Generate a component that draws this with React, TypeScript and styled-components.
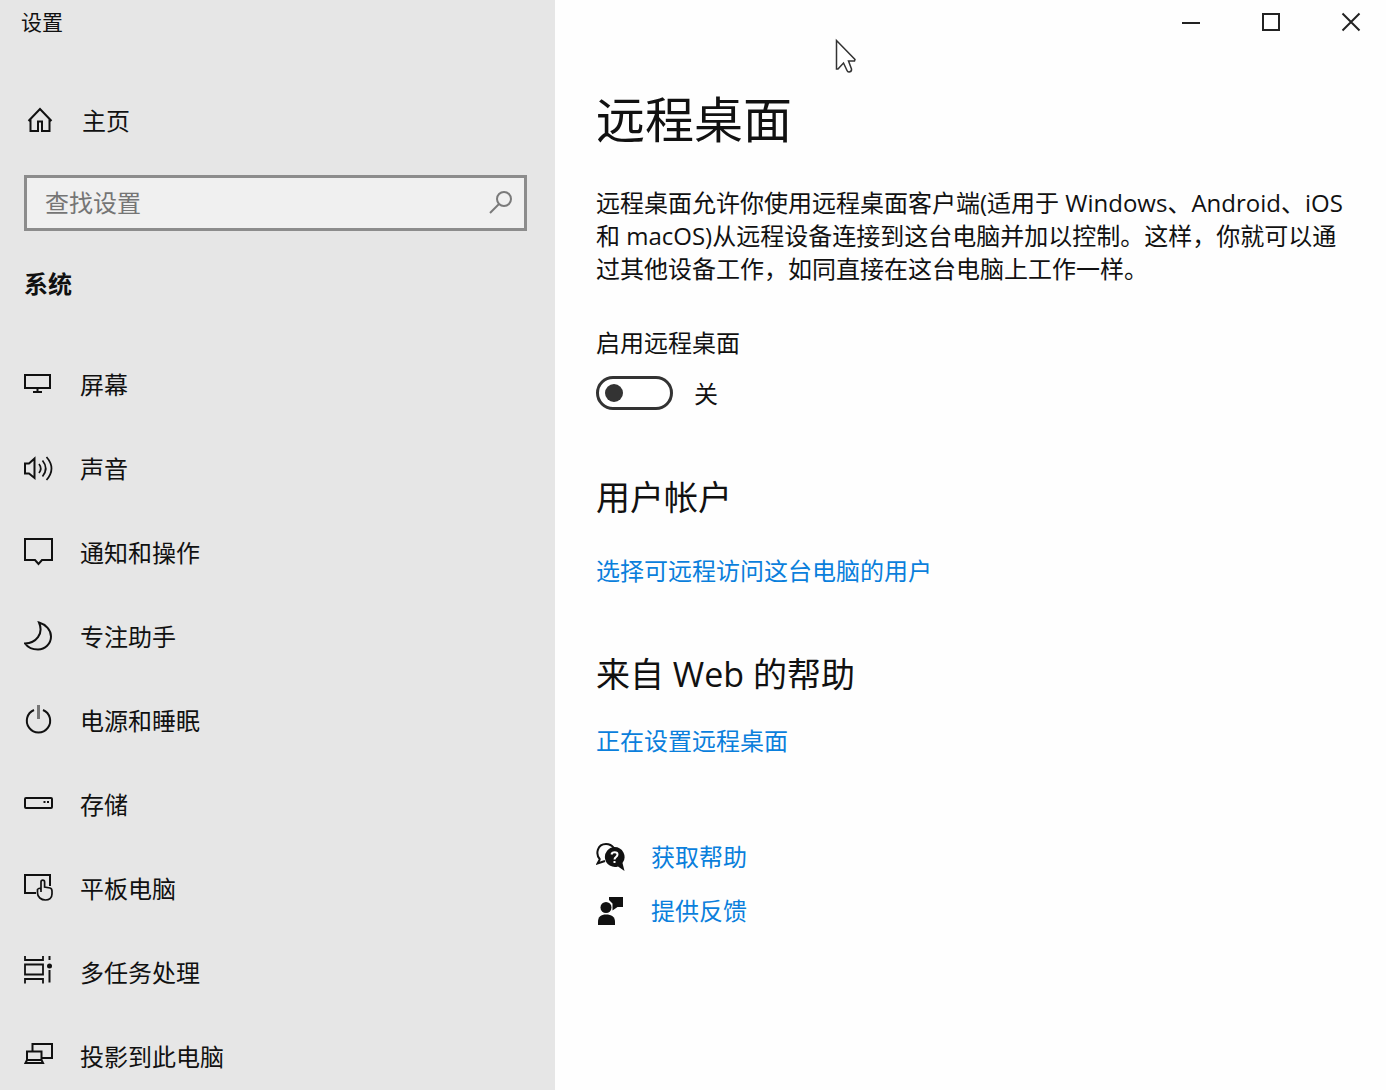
import React, { useState } from "react";
import styled, { createGlobalStyle } from "styled-components";

const GlobalStyle = createGlobalStyle`
  *, *::before, *::after { box-sizing: border-box; }
  body {
    margin: 0;
    background: #fefefe;
    color: #111;
    font-family: "Open Sans", "Noto Sans CJK SC", sans-serif;
    font-size: 24px;
    line-height: 33px;
  }
  h1, h2, p { margin: 0; font-weight: 400; }
`;

const Window = styled.div`
  display: flex;
  height: 100vh;
  overflow: hidden;
`;

const Sidebar = styled.aside`
  flex: 0 0 555px;
  background: #e6e6e6;
  overflow: hidden;
`;

const AppName = styled.div`
  height: 44px;
  padding-left: 21px;
  font-size: 21px;
  line-height: 44px;
`;

const SidebarLink = styled.a`
  display: flex;
  align-items: center;
  gap: 26px;
  height: 84px;
  padding: 0 0 2px 24px;
  color: inherit;
  text-decoration: none;
`;

const HomeLink = styled(SidebarLink)`
  margin-top: 35px;
  padding-left: 26px;
`;

const SearchBox = styled.label`
  display: flex;
  align-items: center;
  height: 56px;
  margin: 12px 28px 0 24px;
  padding: 0 10px 2px 18px;
  border: 3px solid #8c8c8c;
  background: #f0f0f0;
  color: #7a7a7a;
`;

const SearchInput = styled.input`
  flex: 1;
  min-width: 0;
  padding: 0;
  border: 0;
  outline: 0;
  background: transparent;
  color: #111;
  font: inherit;
  &::placeholder { color: #757575; opacity: 1; }
`;

const SectionName = styled.h2`
  margin: 36px 0 42px;
  padding-left: 24px;
  font-size: 24px;
  line-height: 34px;
  && { font-weight: 700; }
`;

const Main = styled.main`
  flex: 1;
  min-width: 0;
`;

const WindowButtons = styled.div`
  display: flex;
  justify-content: flex-end;
  gap: 10px;
`;

const WindowButton = styled.button`
  display: grid;
  place-items: center;
  width: 70px;
  height: 44px;
  padding: 0;
  border: 0;
  background: none;
  color: #222;
`;

const Content = styled.div`
  padding: 43px 32px 0 41px;
`;

const Title = styled.h1`
  font-size: 49px;
  line-height: 64px;
`;

const Intro = styled.p`
  margin-top: 35px;
`;

const SwitchLabel = styled.label`
  display: block;
  margin-top: 41px;
`;

const SwitchRow = styled.div`
  display: flex;
  align-items: center;
  gap: 21px;
  height: 34px;
  margin-top: 17px;
`;

const Switch = styled.input`
  appearance: none;
  display: flex;
  align-items: center;
  width: 77px;
  height: 34px;
  margin: 0;
  padding: 0 6px;
  border: 3px solid #333;
  border-radius: 17px;
  background: #fff;
  &::before {
    content: "";
    width: 18px;
    height: 18px;
    border-radius: 50%;
    background: #333;
  }
  &:checked { justify-content: flex-end; border-color: #0078d7; background: #0078d7; }
  &:checked::before { background: #fff; }
`;

const Heading = styled.h2`
  margin-top: 65px;
  font-size: 34px;
  line-height: 44px;
`;

const Link = styled.a<{ $space: number }>`
  display: block;
  width: fit-content;
  margin-top: ${(p) => p.$space}px;
  color: #0a7fdc;
  text-decoration: none;
`;

const Support = styled.div`
  display: grid;
  gap: 21px;
  margin-top: 83px;
`;

const SupportRow = styled.div`
  display: flex;
  align-items: center;
  gap: 25px;
`;

const Pointer = styled.svg`
  position: absolute;
  left: 834px;
  top: 38px;
  pointer-events: none;
`;

const Glyph = styled.svg`
  flex: none;
  fill: none;
  stroke: currentColor;
  stroke-width: 2;
`;

const NavIcon = ({ children }: { children: React.ReactNode }) => (
  <Glyph width="30" height="34" viewBox="0 -3 30 34" aria-hidden="true">
    {children}
  </Glyph>
);

const navItems: { name: string; icon: React.ReactNode }[] = [
  { name: "屏幕", icon: <path d="M1 5H26V18H1ZM13.5 18V22.5M9 22H18" /> },
  {
    name: "声音",
    icon: (
      <>
        <path d="M1 9.5H5L10.5 4.5V24L5 19.5H1Z" />
        <g strokeWidth="1.7">
          <path d="M15 10Q18.5 14.5 15 19" />
          <path d="M18.5 6.5Q25 14.5 18.5 22.5" />
          <path d="M22.5 3Q32.5 14.5 22.5 26" />
        </g>
      </>
    ),
  },
  { name: "通知和操作", icon: <path d="M1 1H28V22H18L14.5 26L11 22H1Z" /> },
  {
    name: "专注助手",
    icon: <path d="M15 .5C22 2.5 27 8 27 14.5C27 22 21 27.5 14 27.5C8 27.5 3.5 25 1 21.5C12 21 20 12 15 .5Z" />,
  },
  {
    name: "电源和睡眠",
    icon: (
      <>
        <path d="M10 4A11.7 11.7 0 1 0 19 4" />
        <path d="M14.5 -1V13" stroke="#777" strokeWidth="3" />
      </>
    ),
  },
  {
    name: "存储",
    icon: (
      <>
        <rect x="1" y="8" width="27" height="10" rx="1" />
        <path d="M19.5 12H21.5M23 12H25" />
      </>
    ),
  },
  {
    name: "平板电脑",
    icon: (
      <>
        <path d="M26 12V1H1V19H12" />
        <path
          d="M17 18V8A1.8 1.8 0 0 1 20.6 8V13L26 14Q28 14.5 28 17V20C28 24 25 26 21.5 26C17 26 13.5 23 13.5 19V15.5Q15.5 13 17 15.5"
          strokeWidth="1.7"
        />
      </>
    ),
  },
  {
    name: "多任务处理",
    icon: (
      <>
        <path d="M1 -2V2H19V-2M1 6.5H19V16.5H1ZM1 25.5V21H19V25.5" strokeWidth="1.8" />
        <path d="M25.5 -2V2M25.5 12V24.5" />
        <circle cx="25.5" cy="8" r="2.5" fill="currentColor" stroke="none" />
      </>
    ),
  },
  {
    name: "投影到此电脑",
    icon: <path d="M8.5 9V2H28V16H18M3 9.5H17.5V18H3ZM3 18L1.5 21H19L17.5 18" />,
  },
];

export default function App() {
  const [enabled, setEnabled] = useState(false);

  return (
    <>
      <GlobalStyle />
      <Window>
        <Sidebar>
          <AppName>设置</AppName>
          <HomeLink href="#home">
            <NavIcon>
              <path d="M2.5 15L14 3L25.5 15M4.5 13V25H12V15.5H16V25H23.5V13" />
            </NavIcon>
            主页
          </HomeLink>
          <SearchBox>
            <SearchInput type="search" placeholder="查找设置" aria-label="查找设置" />
            <Glyph width="26" height="26" viewBox="0 0 26 26" aria-hidden="true">
              <circle cx="16" cy="10" r="7" />
              <path d="M11 15L2 24" />
            </Glyph>
          </SearchBox>
          <SectionName>系统</SectionName>
          <nav aria-label="系统">
            {navItems.map((item) => (
              <SidebarLink href="#" key={item.name}>
                <NavIcon>{item.icon}</NavIcon>
                {item.name}
              </SidebarLink>
            ))}
          </nav>
        </Sidebar>
        <Main>
          <WindowButtons>
            <WindowButton aria-label="最小化">
              <Glyph width="20" height="20" viewBox="0 0 20 20"><path d="M1 11H19" /></Glyph>
            </WindowButton>
            <WindowButton aria-label="最大化">
              <Glyph width="20" height="20" viewBox="0 0 20 20"><rect x="2" y="2" width="16" height="16" /></Glyph>
            </WindowButton>
            <WindowButton aria-label="关闭">
              <Glyph width="20" height="20" viewBox="0 0 20 20"><path d="M1.5 1.5L18.5 18.5M18.5 1.5L1.5 18.5" /></Glyph>
            </WindowButton>
          </WindowButtons>
          <Content>
            <Title>远程桌面</Title>
            <Intro>
              远程桌面允许你使用远程桌面客户端(适用于 Windows、Android、iOS 和 macOS)从远程设备连接到这台电脑并加以控制。这样，你就可以通过其他设备工作，如同直接在这台电脑上工作一样。
            </Intro>
            <SwitchLabel htmlFor="remote-desktop">启用远程桌面</SwitchLabel>
            <SwitchRow>
              <Switch
                id="remote-desktop"
                type="checkbox"
                role="switch"
                checked={enabled}
                onChange={(e) => setEnabled(e.target.checked)}
              />
              <span>{enabled ? "开" : "关"}</span>
            </SwitchRow>
            <Heading>用户帐户</Heading>
            <Link href="#users" $space={35}>选择可远程访问这台电脑的用户</Link>
            <Heading>来自 Web 的帮助</Heading>
            <Link href="#setup" $space={28}>正在设置远程桌面</Link>
            <Support>
              <SupportRow>
                <Glyph width="30" height="30" viewBox="0 0 30 30" aria-hidden="true">
                  <path d="M4 17.5C-1 12 1.5 2 10 2C13.5 2 16 3.5 18 6M4 17L1.5 21.5L9 19" />
                  <path
                    d="M18.5 5A10 10 0 1 0 22 24.5L28.5 29L26.5 21A10 10 0 0 0 18.5 5Z"
                    fill="currentColor"
                    stroke="none"
                  />
                  <path d="M15.5 12.5C16 9.5 21.5 9.5 21.5 12.5C21.5 15 18.5 15 18.5 17.5M18.5 19V21" stroke="#fff" />
                </Glyph>
                <Link href="#help" $space={0}>获取帮助</Link>
              </SupportRow>
              <SupportRow>
                <Glyph width="30" height="30" viewBox="0 0 30 30" aria-hidden="true">
                  <g fill="currentColor" stroke="none">
                    <circle cx="10" cy="11.5" r="5.5" />
                    <path d="M2 29V25.5C2 21 5 18.5 10 18.5C15.5 18.5 19 21 19 25.5V29Z" />
                    <path d="M13 1H27V11H21.5L16.5 14.5V7.5L13 4Z" />
                  </g>
                </Glyph>
                <Link href="#feedback" $space={0}>提供反馈</Link>
              </SupportRow>
            </Support>
          </Content>
        </Main>
      </Window>
      <Pointer width="26" height="38" viewBox="0 0 26 38" aria-hidden="true">
        <path
          d="M2.5 2.5L21 21.5L20.5 23H14.5L17.5 31C18 34 14 35 13 32.5L9.5 25L4 31H2.5Z"
          fill="#fff"
          stroke="#333"
          strokeWidth="1.5"
        />
      </Pointer>
    </>
  );
}
